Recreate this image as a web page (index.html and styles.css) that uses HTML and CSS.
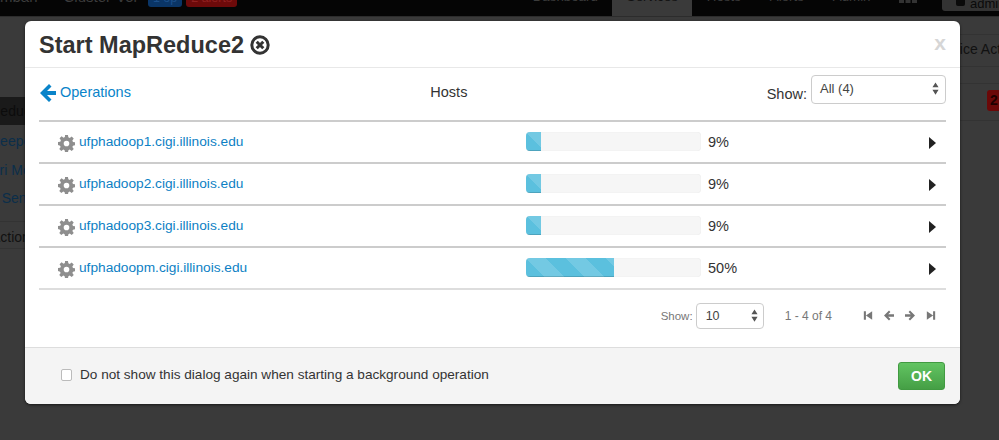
FILE: index.html
```html
<!DOCTYPE html>
<html lang="en">
<head>
<meta charset="utf-8">
<title>Start MapReduce2</title>
<link rel="stylesheet" href="styles.css">
</head>
<body>
<div class="page">
  <nav class="topnav">
    <div class="brand"><span class="brand-name">Ambari</span><span class="brand-name cluster">Cluster-Vol</span><span class="pill pill-blue">1 op</span><span class="pill pill-red">2 alerts</span></div>
    <div class="tabs"><span class="tab">Dashboard</span><span class="tab active">Services</span><span class="tab">Hosts</span><span class="tab">Alerts</span><span class="tab">Admin</span><svg class="grid-icon" viewBox="0 0 18 3" aria-hidden="true"><path d="M0 0h5v3H0zM6.500 0h5v3h-5zM13 0h5v3h-5z" fill="#333"/></svg><span class="user"><span class="user-icon"></span>admin</span></div>
  </nav>
  <div class="subbar"></div>
  <div class="backdrop-content">
    <aside class="side">
      <div class="side-head">MapReduce2</div>
      <div class="side-item item-zk">Zookeeper</div>
      <div class="side-item item-am">Ambari Metrics</div>
      <div class="side-item item-kb">Kerberos Sensor</div>
      <div class="side-foot">Actions</div>
    </aside>
    <main class="back-main">
      <div class="back-btn-row"><span class="back-btn">Service Actions</span></div>
      <div class="back-badge-row"><span class="badge">2</span></div>
    </main>
  </div>
</div>

<section class="modal">
  <header class="modal-head">
    <h3 class="modal-title">Start MapReduce2</h3>
    <svg class="title-icon" viewBox="0 0 20 20" aria-hidden="true"><circle cx="10" cy="10" r="8.200" fill="none" stroke="#333" stroke-width="3"/><path d="M6.700 6.700l6.600 6.600M13.300 6.700l-6.600 6.600" stroke="#333" stroke-width="3"/></svg>
    <span class="close">x</span>
  </header>
  <div class="modal-body">
    <div class="toolbar">
      <a class="back-link"><svg class="back-arrow" viewBox="0 0 16 18" aria-hidden="true"><path d="M9 0L0 9l9 9 2.500-2.500L7 11h9V7H7l4.500-4.500z" fill="#0a84c9"/></svg>Operations</a>
      <span class="toolbar-title">Hosts</span>
      <div class="toolbar-show"><span class="show-label">Show:</span>
        <div class="select select-lg"><span>All (4)</span><svg class="updown" viewBox="0 0 8 14" aria-hidden="true"><path d="M4 0l3.500 5.500H.5zM4 14L.5 8.500h7z" fill="#555"/></svg></div>
      </div>
    </div>

    <div class="rows">
      <div class="row">
        <div class="host"><svg class="gear" viewBox="0 0 20 20" aria-hidden="true"><use href="#gear-shape"/></svg><a class="host-link">ufphadoop1.cigi.illinois.edu</a></div>
        <div class="progress"><div class="bar bar-9"></div></div><span class="pct">9%</span>
        <span class="caret"></span>
      </div>
      <div class="row">
        <div class="host"><svg class="gear" viewBox="0 0 20 20" aria-hidden="true"><use href="#gear-shape"/></svg><a class="host-link">ufphadoop2.cigi.illinois.edu</a></div>
        <div class="progress"><div class="bar bar-9"></div></div><span class="pct">9%</span>
        <span class="caret"></span>
      </div>
      <div class="row">
        <div class="host"><svg class="gear" viewBox="0 0 20 20" aria-hidden="true"><use href="#gear-shape"/></svg><a class="host-link">ufphadoop3.cigi.illinois.edu</a></div>
        <div class="progress"><div class="bar bar-9"></div></div><span class="pct">9%</span>
        <span class="caret"></span>
      </div>
      <div class="row">
        <div class="host"><svg class="gear" viewBox="0 0 20 20" aria-hidden="true"><use href="#gear-shape"/></svg><a class="host-link">ufphadoopm.cigi.illinois.edu</a></div>
        <div class="progress"><div class="bar bar-50"></div></div><span class="pct">50%</span>
        <span class="caret"></span>
      </div>
    </div>

    <div class="pager">
      <span class="pager-label">Show:</span>
      <div class="select select-sm"><span>10</span><svg class="updown" viewBox="0 0 8 14" aria-hidden="true"><path d="M4 0l3.500 5.500H.5zM4 14L.5 8.500h7z" fill="#555"/></svg></div>
      <span class="pager-info">1 - 4 of 4</span>
      <div class="pager-icons">
        <svg viewBox="0 0 12 12" aria-hidden="true"><path d="M1 1h2.500v10H1zM3.500 6L11 1v10z" fill="#777"/></svg>
        <svg viewBox="0 0 12 12" aria-hidden="true"><path d="M6 0L0 6l6 6 1.700-1.700L5 7.500h7v-3H5l2.700-2.800z" fill="#777"/></svg>
        <svg viewBox="0 0 12 12" aria-hidden="true"><path d="M6 0l6 6-6 6-1.700-1.700L7 7.500H0v-3h7L4.300 1.700z" fill="#777"/></svg>
        <svg viewBox="0 0 12 12" aria-hidden="true"><path d="M8.500 1H11v10H8.500zM8.500 6L1 1v10z" fill="#777"/></svg>
      </div>
    </div>
  </div>
  <footer class="modal-foot">
    <label class="check-label"><span class="checkbox"></span>Do not show this dialog again when starting a background operation</label>
    <span class="ok">OK</span>
  </footer>
</section>

<svg class="defs" aria-hidden="true"><defs>
  <g id="gear-shape"><path fill="#8e8e8e" fill-rule="evenodd" d="M8.300 0h3.400l.5 2.700 1.600.7 2.300-1.600 2.400 2.400-1.600 2.300.7 1.600 2.700.5v3.400l-2.700.5-.7 1.600 1.600 2.300-2.400 2.400-2.300-1.600-1.600.7-.5 2.700H8.300l-.5-2.700-1.600-.7-2.300 1.600-2.400-2.400 1.600-2.300-.7-1.600L0 11.700V8.300l2.700-.5.7-1.600-1.600-2.300 2.400-2.400 2.300 1.600 1.600-.7zM10 6.700a3.300 3.300 0 1 0 0 6.600 3.300 3.300 0 0 0 0-6.600z"/></g>
</defs></svg>
</body>
</html>
```
FILE: styles.css
```css
* { box-sizing: border-box; }
html, body { margin: 0; padding: 0; height: 100%; overflow: hidden; }
body { background: #3a3a3a; font-family: "Liberation Sans", Arial, sans-serif; font-size: 14px; color: #333; position: relative; }

.page { height: 440px; overflow: hidden; color: #1d1d1d; }

.topnav { height: 16px; background: #050505; display: flex; justify-content: space-between; overflow: hidden; color: #3c3c3c; align-items: flex-end; }
.brand { display: flex; align-items: flex-end; margin-left: -10px; height: 16px; }
.brand-name { font-size: 15px; line-height: 18px; margin-bottom: 10px; white-space: nowrap; }
.cluster { margin-left: 26px; }
.pill { height: 22px; border-radius: 3px; padding: 4px 5px; font-size: 12.500px; line-height: 18px; margin-bottom: 9px; white-space: nowrap; }
.pill-blue { background: #0a3566; color: #1c4f8a; margin-left: 11px; }
.pill-red { background: #6d0a0a; color: #902020; margin-left: 4px; }

.tabs { display: flex; align-items: flex-end; height: 16px; }
.tab { padding: 0 14.500px 11px; font-size: 13.300px; line-height: 17px; height: 28px; white-space: nowrap; display: flex; align-items: flex-end; }
.tab.active { background: #3a3a3a; color: #111; }
.grid-icon { width: 18px; height: 3px; margin: 0 25px 13px 14px; }
.user { background: #333; color: #0a0a0a; border-radius: 3px 0 0 3px; height: 28px; margin-bottom: 5px; padding: 14px 0 0 14px; width: 57px; font-size: 13px; line-height: 14px; overflow: hidden; white-space: nowrap; display: flex; }
.user-icon { width: 9px; height: 9px; background: #0a0a0a; border-radius: 2px; margin-right: 5px; flex: none; }

.subbar { height: 1px; background: #2c2c2c; }

.backdrop-content { display: flex; justify-content: space-between; padding-top: 80px; }
.side { width: 130px; font-size: 14px; }
.side-head { background: #1a1a1a; height: 28px; line-height: 28px; color: #0c0c0c; text-indent: -37px; overflow: hidden; white-space: nowrap; }
.side-item { height: 28.500px; line-height: 33px; color: #0b2e4a; overflow: hidden; white-space: nowrap; }
.item-zk { text-indent: -31px; }
.item-am { text-indent: -37px; }
.item-kb { text-indent: -59px; }
.side-foot { height: 28px; line-height: 30px; margin-top: 10px; border-top: 1px solid #333; border-bottom: 1px solid #333; text-indent: -9px; overflow: hidden; color: #111; white-space: nowrap; }

.back-main { width: 100px; margin-top: -80px; }
.back-btn-row { height: 33px; margin-top: 17px; padding: 6px 0 0 32px; border-top: 1px solid #333; border-bottom: 1px solid #333; white-space: nowrap; overflow: hidden; color: #111; font-size: 14px; line-height: 17px; }
.back-badge-row { height: 38px; margin-top: 16px; display: flex; justify-content: flex-end; border-top: 1px solid #333; border-bottom: 1px solid #333; }
.badge { width: 12px; height: 21px; background: #6b0808; color: #1d0000; border-radius: 3px 0 0 3px; font-weight: 700; font-size: 14px; line-height: 21px; padding-left: 3px; overflow: hidden; margin-top: 6px; }

.modal { position: absolute; left: 25px; top: 21px; width: 935px; height: 383px; background: #fff; border-radius: 6px; box-shadow: 0 1px 3px rgba(0,0,0,.6); display: flex; flex-direction: column; overflow: hidden; }

.modal-head { height: 47px; padding: 2px 14px 0; border-bottom: 1px solid #e8e8e8; display: flex; align-items: center; flex: none; }
.modal-title { margin: 0; font-size: 23.500px; line-height: 30px; font-weight: 700; color: #333; }
.title-icon { width: 20px; height: 20px; margin-left: 6px; }
.close { margin: -5px 0 0 auto; font-size: 21px; font-weight: 700; color: #d6d6d6; line-height: 20px; }

.modal-body { flex: 1; padding: 0 14px; display: flex; flex-direction: column; }

.toolbar { height: 54px; padding-bottom: 4px; display: grid; grid-template-columns: 1fr 1fr 1fr; align-items: center; border-bottom: 2px solid #ccc; flex: none; }
.back-link { color: #0a84c9; display: flex; align-items: center; font-size: 14.500px; }
.back-arrow { width: 16px; height: 18px; margin: 2px 4px 0 1px; }
.toolbar-title { font-size: 14.500px; color: #333; justify-self: start; margin-left: 89px; }
.toolbar-show { display: flex; align-items: center; justify-content: flex-end; }
.show-label { font-size: 14.500px; margin: 3px 4px 0 0; }

.select { border: 1px solid #ccc; border-radius: 4px; display: flex; align-items: center; justify-content: space-between; background: #fff; color: #444; }
.select-lg { width: 135px; height: 29px; padding: 0 3px 2px 8px; font-size: 13px; margin-bottom: 6px; }
.select-sm { width: 68px; height: 26px; padding: 0 2px 0 9px; font-size: 12.500px; }
.updown { width: 7px; height: 13px; margin-right: 3px; }

.rows { flex: none; }
.row { height: 42px; border-bottom: 2px solid #ccc; display: flex; align-items: center; padding-left: 19px; }
.row:last-child { border-bottom-color: #ddd; }
.host { width: 468px; display: flex; align-items: center; }
.gear { width: 17px; height: 17px; margin: 2px 4px 0 0; flex: none; }
.host-link { color: #0d7fc4; font-size: 13.700px; white-space: nowrap; margin-top: -1px; }

.progress { width: 175px; height: 19px; background: #f6f6f6; border-radius: 4px; overflow: hidden; box-shadow: inset 0 0 1px rgba(0,0,0,.12); flex: none; margin-top: -1px; }
.bar { height: 100%; box-shadow: inset 0 -1px 0 rgba(0,0,0,.15); background-color: #5bc0de; background-image: linear-gradient(45deg, rgba(255,255,255,.15) 25%, transparent 25%, transparent 50%, rgba(255,255,255,.15) 50%, rgba(255,255,255,.15) 75%, transparent 75%, transparent); background-size: 40px 40px; }
.bar-9 { width: 15px; }
.bar-50 { width: 88px; }
.pct { margin: -1px 0 0 7px; font-size: 14.500px; color: #333; }
.caret { margin: 2px 10px 0 auto; width: 0; height: 0; border-left: 7px solid #222; border-top: 6px solid transparent; border-bottom: 6px solid transparent; }

.pager { flex: 1; display: flex; align-items: center; justify-content: flex-end; font-size: 12px; color: #777; padding: 0 10px 6px 0; }
.pager-label { margin-right: 3px; font-size: 11.500px; }
.pager-info { margin-left: 21px; }
.pager-icons { display: flex; gap: 11px; margin-left: 31px; }
.pager-icons svg { width: 10px; height: 11px; }

.modal-foot { height: 57px; flex: none; background: #f4f4f4; border-top: 1px solid #ddd; display: flex; align-items: center; justify-content: space-between; padding: 0 15px 0 36px; }
.check-label { display: flex; align-items: center; font-size: 13.600px; color: #333; margin-bottom: 3px; }
.checkbox { width: 11px; height: 12px; border: 1px solid #bbb; border-radius: 2px; background: #fff; margin-right: 8px; }
.ok { width: 47px; height: 28px; background: linear-gradient(#62c462, #459f45); border: 1px solid #419a41; border-radius: 3px; color: #fff; font-weight: 700; font-size: 14px; display: flex; align-items: center; justify-content: center; }

.defs { width: 0; height: 0; position: absolute; }
```
